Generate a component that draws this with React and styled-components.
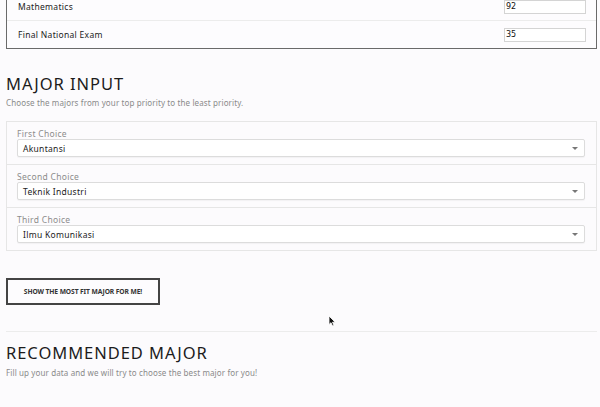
import React from "react";
import styled, { createGlobalStyle } from "styled-components";

const Global = createGlobalStyle`
  html, body { margin: 0; padding: 0; background: #fcfbfd; overflow: hidden; }
  body { font-family: "Noto Sans", "Open Sans", sans-serif; color: #222; }
`;

const Page = styled.div`
  position: relative;
  width: 600px;
  height: 407px;
  overflow: hidden;
`;

const Content = styled.div`
  margin-top: -8px;
  padding: 0 3px 0 6px;
  display: flex;
  flex-direction: column;
`;

const ScoreCard = styled.div`
  border: 1px solid #6a6a6a;
  background: #fdfcfe;
`;

const ScoreRow = styled.div`
  display: flex;
  align-items: center;
  justify-content: space-between;
  height: 27px;
  padding: 0 10px 0 11px;
  & + & { border-top: 1px solid #ececec; }
`;

const ScoreLabel = styled.span`
  font-size: 8.5px;
  letter-spacing: 0.3px;
  color: #222;
`;

const ScoreInput = styled.input`
  width: 82px;
  height: 14px;
  box-sizing: border-box;
  border: 1px solid #d4d4d4;
  background: #fff;
  font-family: "DejaVu Sans", sans-serif;
  font-size: 8px;
  padding: 0 1px;
  color: #111;
  outline: none;
`;

const Section = styled.section`
  display: flex;
  flex-direction: column;
  padding-top: ${p => p.$top}px;
`;

const Heading = styled.h2`
  margin: 0;
  font-family: "Noto Sans", sans-serif;
  font-weight: 400;
  font-size: 16.5px;
  line-height: 20px;
  letter-spacing: 0.95px;
  color: #1c1c1c;
`;

const Sub = styled.p`
  margin: ${p => p.$gap}px 0 0;
  font-size: 8px;
  line-height: 11px;
  letter-spacing: 0.12px;
  color: #8a8a8a;
`;

const ChoiceCard = styled.div`
  margin-top: 13px;
  border: 1px solid #e6e6e6;
  background: #fcfbfd;
`;

const ChoiceRow = styled.div`
  display: flex;
  flex-direction: column;
  padding: 6px 11px 7px 10px;
  & + & { border-top: 1px solid #e6e6e6; }
`;

const ChoiceLabel = styled.label`
  font-size: 8.5px;
  line-height: 11px;
  letter-spacing: 0.3px;
  color: #8c8c8c;
`;

const Select = styled.div`
  height: 18px;
  box-sizing: border-box;
  border: 1px solid #dcdcdc;
  border-radius: 2px;
  background: #fff;
  box-shadow: 0 1px 1px rgba(0,0,0,0.04);
  display: flex;
  align-items: center;
  justify-content: space-between;
  padding: 0 6px 0 5px;
  font-size: 8.5px;
  letter-spacing: 0.3px;
  color: #222;
`;

const Caret = styled.span`
  width: 0;
  height: 0;
  border-left: 3px solid transparent;
  border-right: 3px solid transparent;
  border-top: 3px solid #777;
`;

const Button = styled.button`
  align-self: flex-start;
  margin-top: 27px;
  width: 154px;
  height: 27px;
  border: 2px solid #444;
  background: #fdfcfe;
  font-family: "Noto Sans", sans-serif;
  font-weight: 700;
  font-size: 6.7px;
  letter-spacing: -0.1px;
  color: #333;
  text-transform: uppercase;
  padding: 0;
`;

const Rule = styled.hr`
  margin: 26px 0 0;
  border: 0;
  border-top: 1px solid #ececec;
`;

const Cursor = styled.svg`
  position: absolute;
  left: 328px;
  top: 315px;
`;

const choices = [
  ["First Choice", "Akuntansi"],
  ["Second Choice", "Teknik Industri"],
  ["Third Choice", "Ilmu Komunikasi"],
];

export default function App() {
  return (
    <Page>
      <Global />
      <Content>
        <ScoreCard>
          <ScoreRow>
            <ScoreLabel>Mathematics</ScoreLabel>
            <ScoreInput defaultValue="92" />
          </ScoreRow>
          <ScoreRow>
            <ScoreLabel>Final National Exam</ScoreLabel>
            <ScoreInput defaultValue="35" />
          </ScoreRow>
        </ScoreCard>

        <Section $top={25}>
          <Heading>MAJOR INPUT</Heading>
          <Sub $gap={3}>Choose the majors from your top priority to the least priority.</Sub>
          <ChoiceCard>
            {choices.map(([label, value]) => (
              <ChoiceRow key={label}>
                <ChoiceLabel>{label}</ChoiceLabel>
                <Select>
                  <span>{value}</span>
                  <Caret />
                </Select>
              </ChoiceRow>
            ))}
          </ChoiceCard>
        </Section>

        <Button>Show the most fit major for me!</Button>
        <Rule />

        <Section $top={11}>
          <Heading>RECOMMENDED MAJOR</Heading>
          <Sub $gap={4}>Fill up your data and we will try to choose the best major for you!</Sub>
        </Section>
      </Content>
      <Cursor width="9" height="12" viewBox="0 0 9 12">
        <path d="M1 1 L1 9.5 L3 7.7 L4.6 11 L6 10.4 L4.5 7.2 L7.2 7.2 Z" fill="#111" stroke="#fff" strokeWidth="0.8" />
      </Cursor>
    </Page>
  );
}
